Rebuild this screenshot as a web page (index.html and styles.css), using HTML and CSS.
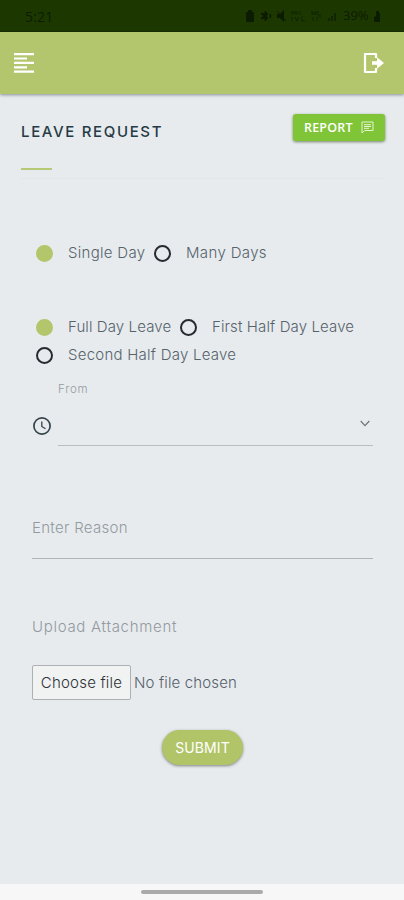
FILE: index.html
```html
<!DOCTYPE html>
<html lang="en">
<head>
<meta charset="utf-8">
<title>Leave Request</title>
<link rel="stylesheet" href="styles.css">
</head>
<body>
<div class="status">
  <span class="time">5:21</span>
  <div class="tray">
    <svg width="102" height="14" viewBox="0 0 102 14" fill="#0c1c03">
      <path d="M1 4q0-1 1-1h1V1h4v2h1q1 0 1 1v8q0 1-1 1H2q-1 0-1-1z"/>
      <path d="M20 2l3 3-2 2 2 2-3 3V9l-3 1-1-1 3-2-3-2 1-1 3 1zM25 5l1 2-1 2z" stroke="#0c1c03"/>
      <path d="M32 5h3l4-4v12l-4-4h-3z"/><path d="M32 2l9 10" stroke="#0c1c03"/>
      <path d="M83 12V9h2v3zM86 12V7h2v5zM89 12V4h2v8z" opacity=".65"/>
      <g fill="none" stroke="#0c1c03" opacity=".75"><path d="M47 6V2l3 3V2M52 2v4M55 2v4M47 8v4M50 8l2 4 2-4M57 7v5h3"/><path d="M67 6V2l2 4 2-4v4M73 2v4h3M68 8v4M72 8v4M74 8h2"/></g>
    </svg>
    <span class="battery">39%</span>
    <svg width="8" height="14" viewBox="0 0 8 14" fill="#0c1c03"><path d="M3 2h3v2h1v9H1V8l2-1z"/></svg>
  </div>
</div>
<header class="bar">
  <svg width="20" height="20" viewBox="0 0 20 20" fill="#fff"><path d="M0 0h20v2.2H0zM0 4.4h13v2.2H0zM0 8.8h20V11H0zM0 13.2h13v2.2H0zM0 17.6h20v2.2H0z"/></svg>
  <svg width="22" height="22" viewBox="0 0 22 22"><path d="M13 6V2H2v18h11v-4" fill="none" stroke="#fff" stroke-width="2.2" stroke-linejoin="round"/><path d="M9 9.2h5V5.2l7 5.8-7 5.8v-4H9z" fill="#fff"/></svg>
</header>
<main>
  <div class="heading">
    <h1>LEAVE REQUEST</h1>
    <button class="report"><span>REPORT</span><svg width="13" height="13" viewBox="0 0 13 13" fill="none" stroke="#e6f5cf"><path d="M1 12V1h11v8.5H3.5z"/><path d="M3 3.7h7M3 5.5h7M3 7.3h5"/></svg></button>
  </div>
  <div class="rule"><i></i></div>
  <form>
    <div class="options day">
      <label><i class="dot on"></i><span class="w-single">Single Day</span></label>
      <label><i class="dot"></i><span class="w-many">Many Days</span></label>
    </div>
    <div class="options type">
      <label><i class="dot on"></i><span class="w-full">Full Day Leave</span></label>
      <label><i class="dot"></i><span class="w-first">First Half Day Leave</span></label>
      <label><i class="dot"></i><span class="w-second">Second Half Day Leave</span></label>
    </div>
    <div class="from">
      <svg class="clock" width="20" height="20" viewBox="0 0 20 20" fill="none" stroke="#36444c" stroke-width="1.7"><circle cx="10" cy="10" r="8.1"/><path d="M9.8 5.5v5l3.7 2.2" stroke-width="1.3"/></svg>
      <div class="select">
        <span>From</span>
        <svg width="10" height="7" viewBox="0 0 10 7" fill="none" stroke="#6d757a" stroke-width="1.2"><path d="M.7 1L5 5.7 9.3 1"/></svg>
      </div>
    </div>
    <div class="reason">Enter Reason</div>
    <div class="upload">Upload Attachment</div>
    <div class="file"><button type="button">Choose file</button><span>No file chosen</span></div>
    <button class="submit" type="button">SUBMIT</button>
  </form>
</main>
<footer><i></i></footer>
</body>
</html>
```
FILE: styles.css
```css
* { box-sizing: border-box; }
body {
  margin: 0;
  height: 900px;
  display: flex;
  flex-direction: column;
  overflow: hidden;
  background: #e7ebee;
  color: #56636b;
  font: 300 15px/20px Inter, "Open Sans", sans-serif;
}
svg { display: block; flex: none; }
button { font: inherit; border: 0; padding: 0; }
.status {
  height: 32px;
  flex: none;
  display: flex;
  justify-content: space-between;
  padding: 0 23px 0 25px;
  background: #1d3701;
  border-bottom: 1px solid #172a02;
  color: #0c1c03;
  font: 400 14px/33px "Open Sans", sans-serif;
}
.time { letter-spacing: .2px; }
.tray { display: flex; align-items: center; }
.battery { width: 28px; margin-left: -4px; margin-right: 2px; font-size: 13px; }
.bar {
  height: 62px;
  flex: none;
  display: flex;
  align-items: center;
  justify-content: space-between;
  padding: 0 19px 1px 14px;
  background: #b3c66e;
  box-shadow: 0 1px 3px rgba(40, 50, 60, .5);
}
main { flex: 1; padding: 20px 20px 0 21px; }
.heading { display: flex; justify-content: space-between; height: 54px; }
h1 {
  margin: 8px 0 0;
  color: #263a45;
  font: 500 15px/20px Inter, sans-serif;
  letter-spacing: 1.65px;
  white-space: nowrap;
}
.report {
  width: 92px;
  height: 27px;
  margin-right: -1px;
  display: flex;
  align-items: center;
  justify-content: space-between;
  padding: 0 11px;
  border-radius: 3px;
  background: #80c537;
  color: #fff;
  font: 600 12.5px/26px "Open Sans", sans-serif;
  letter-spacing: .2px;
  box-shadow: 0 1px 3px rgba(40, 60, 20, .6);
}
.rule { height: 11px; border-bottom: 1px solid #e1e6e8; }
.rule i { display: block; width: 31px; height: 2px; background: #b6c976; }
form { padding: 0 11px 0 11px; }
.options { display: flex; flex-wrap: wrap; padding-left: 4px; }
.options label { display: flex; align-items: center; height: 28px; white-space: nowrap; }
.options span { margin-left: 15px; margin-right: 8px; }
.day { margin-top: 60px; }
.type { margin-top: 46px; margin-right: -9px; }
.dot { width: 17px; height: 17px; border: 2px solid #252b30; border-radius: 50%; }
.dot.on { background: #b3c66c; border-color: #b3c66c; }
.w-single { width: 78px; letter-spacing: .3px; }
.w-many { width: 81px; letter-spacing: .35px; }
.w-full { width: 104px; letter-spacing: .1px; }
.w-first { width: 142px; letter-spacing: .12px; }
.w-second { width: 168px; letter-spacing: .24px; }
.from { display: flex; align-items: flex-start; height: 77px; }
.clock { margin-top: 47px; }
.select {
  flex: 1;
  height: 77px;
  margin-left: 6px;
  display: flex;
  justify-content: space-between;
  padding: 10px 3px 0 0;
  border-bottom: 1px solid #b8bec1;
  color: #949ca1;
  font-size: 11.5px;
}
.select svg { margin-top: 41px; }
.select span { letter-spacing: .8px; }
.reason {
  height: 113px;
  padding-top: 72px;
  border-bottom: 1px solid #afb5b9;
  color: #929a9f;
  letter-spacing: .3px;
}
.upload { padding-top: 58px; color: #929a9f; letter-spacing: .7px; }
.file { display: flex; align-items: center; margin-top: 28px; color: #56606a; }
.file button {
  width: 99px;
  height: 35px;
  border: 1px solid #adb1b3;
  border-radius: 2px;
  background: #f1f2f2;
  color: #2d3337;
  letter-spacing: .2px;
}
.file span { margin-left: 3px; letter-spacing: .15px; }
.submit {
  display: block;
  width: 81px;
  height: 35px;
  margin: 30px auto 0;
  border-radius: 18px;
  background: #b1c467;
  color: #fff;
  font: 400 14px/34px Inter, sans-serif;
  letter-spacing: .1px;
  box-shadow: 0 1px 3px rgba(40, 50, 50, .55);
}
footer { height: 16px; flex: none; background: #f7f7f8; padding-top: 6px; }
footer i { display: block; width: 122px; height: 4px; margin: 0 auto; border-radius: 2px; background: #aaa; }
```
